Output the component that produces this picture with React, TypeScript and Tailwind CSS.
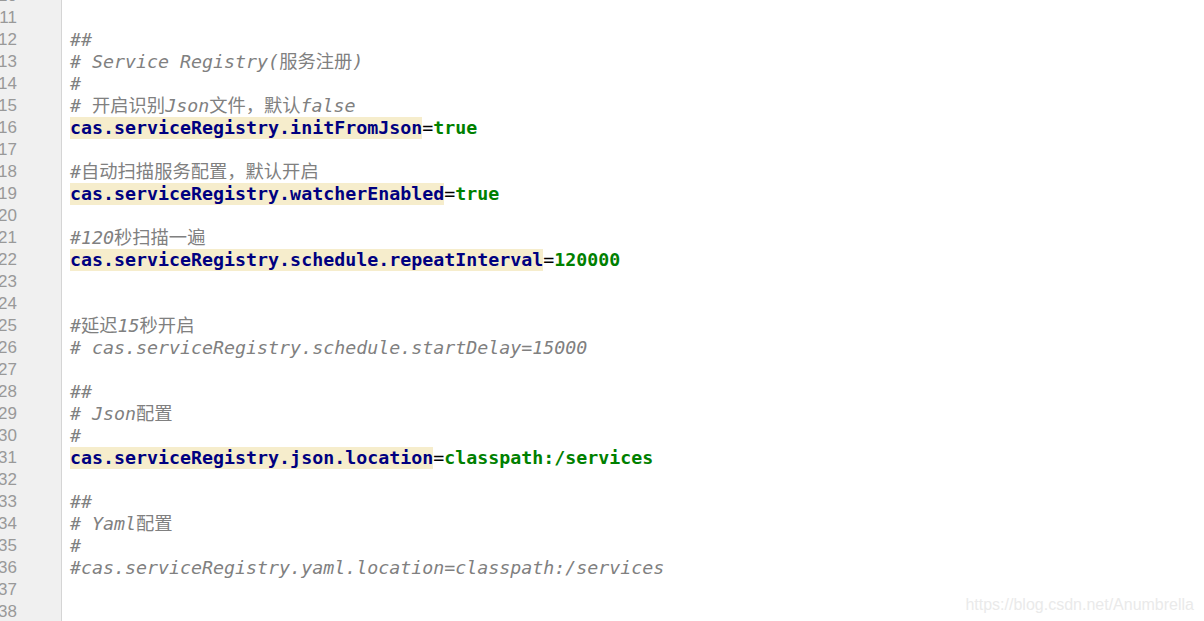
import React from "react";

type Seg = { t: string; k: "c" | "key" | "eq" | "val" };
type Line = Seg[];

const C = (t: string): Line => [{ t, k: "c" }];
const P = (key: string, val: string): Line => [
  { t: key, k: "key" },
  { t: "=", k: "eq" },
  { t: val, k: "val" },
];

const lines: { n: number; l: Line }[] = [
  { n: 10, l: [] },
  { n: 11, l: [] },
  { n: 12, l: C("##") },
  { n: 13, l: C("# Service Registry(服务注册)") },
  { n: 14, l: C("#") },
  { n: 15, l: C("# 开启识别Json文件，默认false") },
  { n: 16, l: P("cas.serviceRegistry.initFromJson", "true") },
  { n: 17, l: [] },
  { n: 18, l: C("#自动扫描服务配置，默认开启") },
  { n: 19, l: P("cas.serviceRegistry.watcherEnabled", "true") },
  { n: 20, l: [] },
  { n: 21, l: C("#120秒扫描一遍") },
  { n: 22, l: P("cas.serviceRegistry.schedule.repeatInterval", "120000") },
  { n: 23, l: [] },
  { n: 24, l: [] },
  { n: 25, l: C("#延迟15秒开启") },
  { n: 26, l: C("# cas.serviceRegistry.schedule.startDelay=15000") },
  { n: 27, l: [] },
  { n: 28, l: C("##") },
  { n: 29, l: C("# Json配置") },
  { n: 30, l: C("#") },
  { n: 31, l: P("cas.serviceRegistry.json.location", "classpath:/services") },
  { n: 32, l: [] },
  { n: 33, l: C("##") },
  { n: 34, l: C("# Yaml配置") },
  { n: 35, l: C("#") },
  { n: 36, l: C("#cas.serviceRegistry.yaml.location=classpath:/services") },
  { n: 37, l: [] },
  { n: 38, l: [] },
  { n: 39, l: [] },
];

const mono = "font-['DejaVu_Sans_Mono','Noto_Sans_CJK_SC',monospace]";
const CJK = /[\u3000-\u9fff\uff00-\uffef]/;

function Comment({ t }: { t: string }) {
  const parts = t.split(/([\u3000-\u9fff\uff00-\uffef]+)/).filter((p) => p);
  return (
    <span className="text-[#808080]">
      {parts.map((p, i) =>
        CJK.test(p) ? (
          <span key={i} className="not-italic">
            {p}
          </span>
        ) : (
          <span key={i} className="italic">
            {p}
          </span>
        )
      )}
    </span>
  );
}

function SegView({ s }: { s: Seg }) {
  if (s.k === "c") return <Comment t={s.t} />;
  if (s.k === "key")
    return (
      <span className="text-[#000080] font-bold bg-[#f6edcc]">{s.t}</span>
    );
  if (s.k === "eq") return <span className="text-[#000000]">{s.t}</span>;
  return <span className="text-[#008000] font-bold">{s.t}</span>;
}

export default function App() {
  return (
    <div className="relative w-[1204px] h-[621px] overflow-hidden bg-white">
      <div className="flex h-full">
        <div className="w-[62px] shrink-0 bg-[#f0f0f0] border-r border-[#d5d5d5] overflow-hidden">
          <div className="-mt-[15px] flex flex-col">
            {lines.map((x) => (
              <div
                key={x.n}
                className="h-[22px] leading-[22px] w-[17px] text-right text-[17px] text-[#999999] font-['Liberation_Sans',sans-serif] whitespace-nowrap flex justify-end"
              >
                {x.n}
              </div>
            ))}
          </div>
        </div>
        <div className="flex-1 overflow-hidden pl-[8px]">
          <div className={`-mt-[15px] flex flex-col ${mono} text-[18.3px]`}>
            {lines.map((x) => (
              <div
                key={x.n}
                className="h-[22px] leading-[22px] whitespace-pre flex items-stretch"
              >
                {x.l.map((s, i) => (
                  <SegView key={i} s={s} />
                ))}
              </div>
            ))}
          </div>
        </div>
      </div>
      <div className="absolute right-[10px] bottom-[4px] text-[16px] text-[#eaeaea] font-['Liberation_Sans',sans-serif]">
        https://blog.csdn.net/Anumbrella
      </div>
    </div>
  );
}
